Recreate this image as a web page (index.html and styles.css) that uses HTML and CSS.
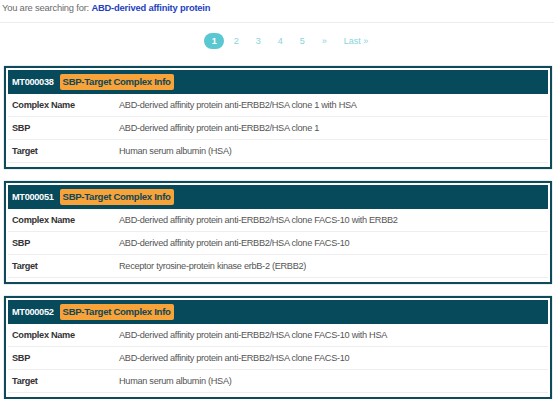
FILE: index.html
```html
<!DOCTYPE html>
<html>
<head>
<meta charset="utf-8">
<link rel="stylesheet" href="styles.css">
</head>
<body>
<div class="search">You are searching for: <b class="term">ABD-derived affinity protein</b></div>
<div class="rule"></div>
<nav class="pager">
  <span class="pg active">1</span>
  <span class="pg">2</span>
  <span class="pg">3</span>
  <span class="pg">4</span>
  <span class="pg">5</span>
  <span class="pg">»</span>
  <span class="pg">Last »</span>
</nav>
<div class="cards">
  <div class="card">
    <div class="head"><span class="id">MT000038</span><span class="badge">SBP-Target Complex Info</span></div>
    <div class="row"><span class="lab">Complex Name</span><span class="val">ABD-derived affinity protein anti-ERBB2/HSA clone 1 with HSA</span></div>
    <div class="row"><span class="lab">SBP</span><span class="val">ABD-derived affinity protein anti-ERBB2/HSA clone 1</span></div>
    <div class="row"><span class="lab">Target</span><span class="val">Human serum albumin (HSA)</span></div>
  </div>
  <div class="card">
    <div class="head"><span class="id">MT000051</span><span class="badge">SBP-Target Complex Info</span></div>
    <div class="row"><span class="lab">Complex Name</span><span class="val">ABD-derived affinity protein anti-ERBB2/HSA clone FACS-10 with ERBB2</span></div>
    <div class="row"><span class="lab">SBP</span><span class="val">ABD-derived affinity protein anti-ERBB2/HSA clone FACS-10</span></div>
    <div class="row"><span class="lab">Target</span><span class="val">Receptor tyrosine-protein kinase erbB-2 (ERBB2)</span></div>
  </div>
  <div class="card">
    <div class="head"><span class="id">MT000052</span><span class="badge">SBP-Target Complex Info</span></div>
    <div class="row"><span class="lab">Complex Name</span><span class="val">ABD-derived affinity protein anti-ERBB2/HSA clone FACS-10 with HSA</span></div>
    <div class="row"><span class="lab">SBP</span><span class="val">ABD-derived affinity protein anti-ERBB2/HSA clone FACS-10</span></div>
    <div class="row"><span class="lab">Target</span><span class="val">Human serum albumin (HSA)</span></div>
  </div>
</div>
</body>
</html>
```
FILE: styles.css
```css
html, body { margin: 0; padding: 0; background: #fff; }
body {
  font-family: "Liberation Sans", Arial, sans-serif;
  font-size: 9.2px;
  letter-spacing: -0.3px;
  color: #333;
  width: 554px;
  overflow: hidden;
}
.search {
  color: #6b6b6b;
  font-size: 9.4px;
  letter-spacing: -0.2px;
  line-height: 14px;
  padding: 1px 0 0 2px;
  height: 21px;
}
.term { color: #1f3fbf; font-weight: bold; }
.rule { height: 1px; background: #ececec; margin: 0 0 10px 0; }
.pager {
  display: flex;
  justify-content: center;
  align-items: center;
  height: 16px;
  padding-left: 26px;
  margin-top: 1px;
}
.pg {
  color: #86d4db;
  font-size: 9px;
  padding: 0 7.5px;
  line-height: 16px;
  margin: 0 1px;
  letter-spacing: 0;
}
.pg.active {
  background: #5bc7d1;
  color: #fff;
  border-radius: 8px;
  font-weight: bold;
}
.cards {
  display: flex;
  flex-direction: column;
  gap: 12px;
  margin-top: 17px;
  padding: 0 2px 0 4px;
}
.card {
  border: 2px solid #0f4a5b;
  padding: 2px 2px 4px 2px;
  box-shadow: 0 0 1px #6f98a3;
}
.head {
  background: #064a5c;
  height: 24px;
  display: flex;
  align-items: center;
  padding-left: 4px;
}
.id {
  color: #fff;
  font-weight: bold;
  margin-right: 6px;
}
.badge {
  background: #f8a23a;
  color: #0d4757;
  font-weight: bold;
  font-size: 9.6px;
  padding: 1px 3px;
  border-radius: 2px;
  line-height: 14px;
}
.row {
  display: flex;
  height: 22px;
  align-items: center;
  border-bottom: 1px solid #eeeeee;
  padding-left: 4px;
}
.lab {
  width: 107px;
  font-weight: bold;
  color: #333;
}
.val { color: #555; }
```
